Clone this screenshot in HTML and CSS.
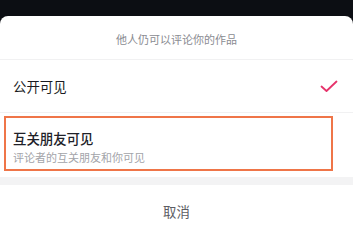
FILE: index.html
```html
<!DOCTYPE html>
<html lang="zh-CN">
<head>
    <meta charset="UTF-8">
    <meta name="viewport" content="width=device-width, initial-scale=1.0">
    <title>评论权限</title>
    <link rel="stylesheet" href="styles.css">
</head>
<body>
    <div class="sheet">
        <!-- 标题 -->
        <div class="cabecera">他人仍可以评论你的作品</div>

        <!-- 选项 -->
        <div class="opcion">
            <span class="titulo">公开可见</span>
            <svg class="check" width="18" height="13" viewBox="0 0 18 13">
                <path d="M1.5 6.5 L6.5 11 L16.5 1.5" fill="none" stroke="#e6336b" stroke-width="1.8" stroke-linecap="round" stroke-linejoin="round"/>
            </svg>
        </div>
        <div class="opcion doble">
            <span class="titulo fuerte">互关朋友可见</span>
            <span class="sub">评论者的互关朋友和你可见</span>
            <div class="marca"></div>
        </div>

        <div class="separador"></div>

        <div class="cancelar">取消</div>
    </div>
</body>
</html>
```

FILE: styles.css
```css
/* Fondo oscuro detrás de la hoja */
body {
    margin: 0;
    background-color: #0c0e13;
    font-family: "Noto Sans CJK SC", "Noto Sans", sans-serif;
}

.sheet {
    margin-top: 16px;
    background-color: #fff;
    border-radius: 8px 8px 0 0;
    min-height: 214px;
}

.cabecera {
    height: 44px;
    display: flex;
    align-items: center;
    justify-content: center;
    padding-top: 2px;
    box-sizing: border-box;
    font-size: 11px;
    color: #8a8b91;
    border-bottom: 1px solid #f1f1f2;
}

.opcion {
    position: relative;
    display: flex;
    align-items: center;
    justify-content: space-between;
    height: 52px;
    padding: 0 15px 0 13px;
    border-bottom: 1px solid #f1f1f2;
}

.titulo {
    font-size: 13.4px;
    color: #1a1b22;
}

.fuerte {
    font-weight: 500;
    color: #202128;
}

/* Opción con subtítulo */
.doble {
    flex-direction: column;
    align-items: flex-start;
    justify-content: center;
    height: 64px;
    gap: 1px;
    border-bottom: none;
    padding-top: 2px;
    box-sizing: border-box;
}

.sub {
    font-size: 11px;
    color: #a3a4a9;
}

/* Recuadro naranja de resaltado */
.marca {
    position: absolute;
    left: 4px;
    top: 3px;
    width: 329px;
    height: 55px;
    border: 2px solid #ef7548;
    box-sizing: border-box;
}

.separador {
    height: 8px;
    background-color: #f3f3f4;
}

.cancelar {
    height: 52px;
    display: flex;
    align-items: center;
    justify-content: center;
    font-size: 13.4px;
    color: #5c5d63;
}
```
